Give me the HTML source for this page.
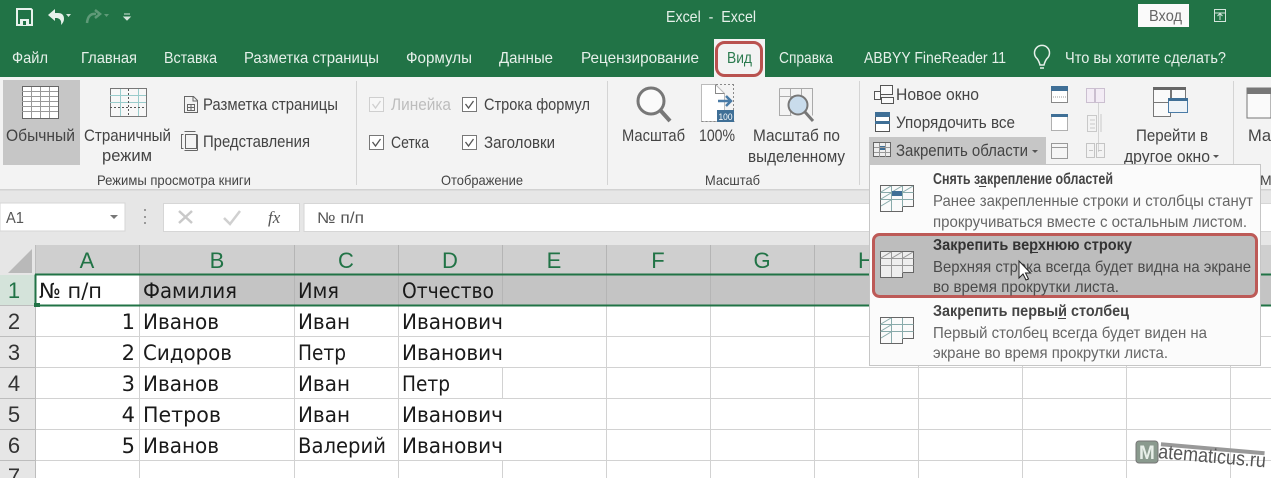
<!DOCTYPE html>
<html><head><meta charset="utf-8"><style>
html,body{margin:0;padding:0;background:#fff;width:1271px;height:478px;overflow:hidden}
svg{display:block}
text{font-family:"Liberation Sans",sans-serif;white-space:pre}
.t{font-size:16px;fill:#e6f0ea}
.r{font-size:16.5px;fill:#444}
.g{font-size:14px;fill:#444}
.c{font-size:21px;fill:#1a1a1a;font-family:"DejaVu Sans",sans-serif}
.h{font-size:22px;fill:#217346;text-anchor:middle}
.n{font-size:22px;fill:#333;text-anchor:middle}
.b{font-size:15.5px;font-weight:bold;fill:#444}
.d{font-size:16px;fill:#666}
.i{fill:none;stroke:#666;stroke-width:1}
</style></head><body>
<svg width="1271" height="478" viewBox="0 0 1271 478" xmlns="http://www.w3.org/2000/svg">
<rect width="1271" height="78" fill="#217346"/>
<rect y="77" width="1271" height="113" fill="#f3f3f3"/>
<rect y="189" width="1271" height="56" fill="#e6e6e6"/>
<rect y="189" width="1271" height="1.5" fill="#d2d2d2"/>

<!-- quick access -->
<path d="M17 9h14l1 1v15H17z" fill="none" stroke="#e8f2ec" stroke-width="2"/>
<rect x="20" y="19" width="9" height="6" fill="#e8f2ec"/><rect x="23" y="21" width="3" height="4" fill="#217346"/>
<path d="M48 15l7-6v4h3q6 0 6 6q0 3-3 6q1-6-4-7h-2v3z" fill="#e8f2ec"/>
<path d="M66 14h5l-2.500 3z" fill="#d5e5dc"/>
<path d="M96 14q-8-1-9 9M95 10l5 4-5 4" fill="none" stroke="#5f9a78" stroke-width="2.500"/>
<path d="M104 14h5l-2.500 3z" fill="#5f9a78"/>
<path d="M124 14h6M124 17h6l-3 3z" stroke="#d5e5dc" fill="#d5e5dc"/>

<text x="666" y="22" class="t" textLength="90" lengthAdjust="spacingAndGlyphs">Excel  -  Excel</text>
<rect x="1138" y="4" width="51" height="23" fill="#fafafa"/>
<text x="1149" y="21" font-size="15.500" fill="#666" textLength="33" lengthAdjust="spacingAndGlyphs">Вход</text>
<path d="M1214.500 9.500h11v12h-11zM1215 13h10M1220 20v-6M1217.500 16l2.500-2.500 2.500 2.500" fill="none" stroke="#d5e5dc"/>

<!-- tabs -->
<text x="12" y="63" class="t" textLength="36" lengthAdjust="spacingAndGlyphs">Файл</text>
<text x="81" y="63" class="t" textLength="56" lengthAdjust="spacingAndGlyphs">Главная</text>
<text x="164" y="63" class="t" textLength="53" lengthAdjust="spacingAndGlyphs">Вставка</text>
<text x="244" y="63" class="t" textLength="135" lengthAdjust="spacingAndGlyphs">Разметка страницы</text>
<text x="406" y="63" class="t" textLength="66" lengthAdjust="spacingAndGlyphs">Формулы</text>
<text x="499" y="63" class="t" textLength="54" lengthAdjust="spacingAndGlyphs">Данные</text>
<text x="581" y="63" class="t" textLength="118" lengthAdjust="spacingAndGlyphs">Рецензирование</text>
<rect x="714" y="39" width="51" height="39" fill="#f3f3f3"/>
<rect x="716.500" y="42.500" width="45" height="33" rx="8" fill="#f3f3f3" stroke="#b9524f" stroke-width="3"/>
<text x="727" y="63" class="t" style="fill:#2b7a4e" textLength="25" lengthAdjust="spacingAndGlyphs">Вид</text>
<text x="779" y="63" class="t" textLength="54" lengthAdjust="spacingAndGlyphs">Справка</text>
<text x="864" y="63" class="t" textLength="142" lengthAdjust="spacingAndGlyphs">ABBYY FineReader 11</text>
<path d="M1040 65q-1-4-3-6.500a7.500 7.500 0 1 1 10 0q-2 2.500-3 6.500zM1040 68h4" fill="none" stroke="#e6f0ea" stroke-width="1.500"/>
<text x="1065" y="63" class="t" textLength="161" lengthAdjust="spacingAndGlyphs">Что вы хотите сделать?</text>

<!-- ribbon: view modes -->
<rect x="3" y="80" width="62" height="85" fill="#c6c6c6"/>
<rect x="3" y="80" width="77" height="85" fill="#c6c6c6"/>
<g stroke="#666" fill="#fff"><rect x="22.500" y="86.500" width="36" height="32"/>
<path d="M22 91.500h36M22 96.500h36M22 101.500h36M22 106.500h36M22 111.500h36M31.500 87v31M40.500 87v31M49.500 87v31" fill="none" stroke="#999"/></g>
<text x="6" y="141" class="r" textLength="69" lengthAdjust="spacingAndGlyphs">Обычный</text>
<g fill="#f7f7f7" stroke="#777"><rect x="110.500" y="88.500" width="36" height="28"/>
<path d="M110 95.500h36M110 102.500h36M120.500 89v27M138.500 89v27" stroke="#9cc" fill="none"/>
<path d="M110 107.500h36M128.500 89v27" stroke="#555" stroke-dasharray="2 2" fill="none"/></g>
<text x="84" y="141" class="r" textLength="87" lengthAdjust="spacingAndGlyphs">Страничный</text>
<text x="102" y="161" class="r" textLength="50" lengthAdjust="spacingAndGlyphs">режим</text>
<path d="M150 96" fill="none"/>
<path d="M150.500 96" fill="none"/>
<path d="M184.500 96.500h9l4 4v12h-13zM193 97v4h4M187.500 104.500h7v6h-7zM191 104v7M187 107.500h8" class="i"/>
<text x="203" y="110" class="r" textLength="135" lengthAdjust="spacingAndGlyphs">Разметка страницы</text>
<path d="M181.500 134.500h2M181.500 148.500h2M181.500 134v15M184.500 131.500h11M197.500 134.500v16M184.500 150.500h13M185.500 134.500h11v14h-11z" class="i"/>
<text x="203" y="147" class="r" textLength="107" lengthAdjust="spacingAndGlyphs">Представления</text>
<text x="97" y="185" class="g" textLength="154" lengthAdjust="spacingAndGlyphs">Режимы просмотра книги</text>
<path d="M356.500 81v104M607.500 81v104M859.500 81v104M1098.500 88v64M1233.500 81v104" stroke="#d4d4d4" fill="none"/>

<!-- checkboxes -->
<rect x="369.500" y="97.500" width="14" height="14" fill="#f7f7f7" stroke="#cfcfcf"/>
<path d="M372.500 104l3 4 5-7" fill="none" stroke="#cfcfcf" stroke-width="1.300"/>
<text x="391" y="110" class="r" style="fill:#bdbdbd" textLength="60" lengthAdjust="spacingAndGlyphs">Линейка</text>
<rect x="462.500" y="97.500" width="14" height="14" fill="#fff" stroke="#777"/>
<path d="M465.500 104l3 4 5-7" fill="none" stroke="#555" stroke-width="1.300"/>
<text x="484" y="110" class="r" textLength="106" lengthAdjust="spacingAndGlyphs">Строка формул</text>
<rect x="369.500" y="135.500" width="14" height="14" fill="#fff" stroke="#777"/>
<path d="M372.500 142l3 4 5-7" fill="none" stroke="#555" stroke-width="1.300"/>
<text x="391" y="148" class="r" textLength="38" lengthAdjust="spacingAndGlyphs">Сетка</text>
<rect x="462.500" y="135.500" width="14" height="14" fill="#fff" stroke="#777"/>
<path d="M465.500 142l3 4 5-7" fill="none" stroke="#555" stroke-width="1.300"/>
<text x="484" y="148" class="r" textLength="71" lengthAdjust="spacingAndGlyphs">Заголовки</text>
<text x="441" y="185" class="g" textLength="82" lengthAdjust="spacingAndGlyphs">Отображение</text>

<!-- zoom -->
<circle cx="651" cy="101" r="13" fill="#fafafa" stroke="#777" stroke-width="3"/>
<path d="M661 111l9 10" stroke="#777" stroke-width="4" fill="none"/>
<text x="622" y="141" class="r" textLength="63" lengthAdjust="spacingAndGlyphs">Масштаб</text>
<path d="M701.500 84.500h14l9 9v28h-23z" fill="#fff" stroke="#bbb"/>
<path d="M715.500 84.500v9h9" fill="none" stroke="#888"/>
<path d="M701.500 121.500h33M733.500 84v38M716 84.500h18" fill="none" stroke="#888" stroke-dasharray="2 2"/>
<path d="M718 101h13M726 96l5 5-5 5" fill="none" stroke="#4a7ba6" stroke-width="2.500"/>
<rect x="717" y="110" width="17" height="12" fill="#3f6f96"/>
<text x="718.500" y="120" font-size="9.500" fill="#fff" textLength="14" lengthAdjust="spacingAndGlyphs">100</text>
<text x="699" y="141" class="r" textLength="36" lengthAdjust="spacingAndGlyphs">100%</text>
<path d="M779.500 88.500h33v27M779.500 88.500v27h12M779 96.500h18M790.500 89v26M801.500 89v6" fill="none" stroke="#aaa"/>
<circle cx="798" cy="105" r="9.500" fill="#c9dcec" stroke="#777" stroke-width="2"/>
<path d="M805 112l8 9" stroke="#777" stroke-width="3"/>
<text x="753" y="141" class="r" textLength="87" lengthAdjust="spacingAndGlyphs">Масштаб по</text>
<text x="748" y="162" class="r" textLength="97" lengthAdjust="spacingAndGlyphs">выделенному</text>
<text x="705" y="185" class="g" textLength="55" lengthAdjust="spacingAndGlyphs">Масштаб</text>

<!-- window -->
<rect x="869" y="137" width="177" height="28" fill="#c6c6c6"/>
<path d="M880.500 85.500h12v9h-12zM874.500 91.500h6v8h-6zM881.500 97.500h12v6h-12z" fill="#fafafa" stroke="#555"/>
<text x="896" y="100" class="r" textLength="83" lengthAdjust="spacingAndGlyphs">Новое окно</text>
<rect x="875.500" y="112.500" width="14" height="19" fill="#fff" stroke="#555"/>
<rect x="875" y="112" width="15" height="5" fill="#3f6f96"/><rect x="875" y="121" width="15" height="3" fill="#3f6f96"/>
<text x="896" y="128" class="r" textLength="119" lengthAdjust="spacingAndGlyphs">Упорядочить все</text>
<rect x="873.500" y="142.500" width="17" height="14" fill="#eee" stroke="#666"/>
<rect x="879" y="146" width="6" height="4" fill="#3f6f96"/>
<path d="M874 147.500h16M874 152.500h16M879.500 143v14M885.500 143v14" stroke="#999" fill="none"/>
<text x="896" y="156" class="r" textLength="132" lengthAdjust="spacingAndGlyphs">Закрепить области</text>
<path d="M1032 150h6l-3 3z" fill="#555"/>
<rect x="1051.500" y="86.500" width="16" height="16" fill="#fff" stroke="#888"/><rect x="1051" y="86" width="17" height="5" fill="#3f6f96"/>
<path d="M1053 97h13" stroke="#999" stroke-dasharray="1 1"/>
<rect x="1051.500" y="114.500" width="16" height="16" fill="#fff" stroke="#666" stroke-dasharray="1 1"/><rect x="1051" y="114" width="17" height="3" fill="#3f6f96"/>
<rect x="1051.500" y="143.500" width="16" height="15" fill="#f5f5f5" stroke="#999"/><path d="M1052 147.500h15" stroke="#999"/>
<path d="M1086.500 88.500h8v14h-8zM1095.500 88.500h9v14h-9z" fill="#f3ecf5" stroke="#cbbfd0"/>
<path d="M1087.500 115.500h9v16h-9zM1090 120h5M1090 124h5M1090 128h5M1101 114v18" fill="none" stroke="#c9c9c9"/>
<path d="M1086.500 143.500h8v14h-8zM1096.500 143.500h8v14h-8zM1089 150.500h4M1098 150.500h4" fill="none" stroke="#c4c4c4"/>
<g fill="#fafafa" stroke="#777"><rect x="1153.500" y="87.500" width="17" height="25"/><rect x="1171.500" y="87.500" width="14" height="25"/><rect x="1153.500" y="102.500" width="17" height="14"/><rect x="1168.500" y="98.500" width="19" height="14" stroke="#4a7ba6" fill="#eef3f7"/></g>
<rect x="1153" y="87" width="33" height="3" fill="#666"/>
<rect x="1168" y="98" width="20" height="3" fill="#3f6f96"/>
<text x="1136" y="141" class="r" textLength="72" lengthAdjust="spacingAndGlyphs">Перейти в</text>
<text x="1124" y="162" class="r" textLength="86" lengthAdjust="spacingAndGlyphs">другое окно</text>
<path d="M1213 155h6l-3 3z" fill="#555"/>
<rect x="1247" y="88" width="24" height="30" fill="#fafafa" stroke="#777"/><rect x="1247" y="88" width="24" height="6" fill="#777"/>
<text x="1248" y="141" class="r">Ма</text>
<text x="1260" y="185" class="g">Ма</text>

<!-- formula bar -->
<rect x="0" y="203" width="125" height="28" fill="#fff" stroke="#d6d6d6"/>
<text x="6" y="223" font-size="15.500" fill="#555" textLength="18" lengthAdjust="spacingAndGlyphs">A1</text>
<path d="M110 215h8l-4 4z" fill="#777"/>
<path d="M145 209v2M145 216v2M145 222v2" stroke="#999" stroke-width="2"/>
<rect x="163.500" y="203.500" width="136" height="28" fill="#fff" stroke="#d6d6d6"/>
<path d="M179 211l13 12M192 211l-13 12" stroke="#c9c9c9" stroke-width="2.500"/>
<path d="M224 218l6 6 10-13" fill="none" stroke="#d0d0d0" stroke-width="2.500"/>
<text x="268" y="223" font-size="17" font-style="italic" style="font-family:'Liberation Serif',serif" fill="#555">fx</text>
<rect x="304" y="203.500" width="968" height="28" fill="#fff" stroke="#d6d6d6"/>
<text x="317" y="223" font-size="15.500" fill="#555" textLength="47" lengthAdjust="spacingAndGlyphs">№ п/п</text>

<!-- grid -->
<rect y="245" width="1271" height="233" fill="#fff"/>
<rect x="0" y="245" width="35" height="233" fill="#e6e6e6"/>
<rect x="35" y="245" width="1236" height="30" fill="#cfcfcf"/>
<path d="M32 249v24H8z" fill="#b9b9b9"/>
<rect x="0" y="275" width="35" height="31" fill="#d4e3da"/>
<rect x="139" y="275" width="1132" height="31" fill="#c4c4c4"/>
<g stroke="#d2d2d2" fill="none">
<path d="M0 336.500h1271M0 367.500h1271M0 398.500h1271M0 429.500h1271M0 460.500h1271"/>
<path d="M139.500 306V478M294.500 306V478M398.500 306V478M606.500 306V478M710.500 306V478M814.500 306V478M918.500 306V478M1022.500 306V478M1126.500 306V478M1230.500 306V478M502.500 368v31M502.500 461v17"/>
<path d="M139.500 245v30M294.500 245v30M398.500 245v30M502.500 245v30M606.500 245v30M710.500 245v30M814.500 245v30M918.500 245v30" stroke="#b5b5b5"/>
<path d="M294.500 275v31M398.500 275v31M502.500 275v31M606.500 275v31M710.500 275v31M814.500 275v31" stroke="#b5b5b5"/>
</g>
<path d="M0 305.500h35M0 336.500h35M0 367.500h35M0 398.500h35M0 429.500h35M0 460.500h35M35.500 245V478" stroke="#bdbdbd" fill="none"/>
<path d="M35.500 274.500V306M35 274.500h1236M35 305.500h1236" stroke="#217346" stroke-width="2" fill="none"/>
<rect x="34" y="303" width="6" height="4" fill="#217346"/>
<text x="87" y="268" class="h">A</text><text x="217" y="268" class="h">B</text><text x="346" y="268" class="h">C</text><text x="450" y="268" class="h">D</text>
<text x="554" y="268" class="h">E</text><text x="658" y="268" class="h">F</text><text x="762" y="268" class="h">G</text><text x="866" y="268" class="h">H</text>
<text x="14" y="298" class="h">1</text><text x="14" y="329" class="n">2</text><text x="14" y="360" class="n">3</text><text x="14" y="391" class="n">4</text><text x="14" y="422" class="n">5</text><text x="14" y="453" class="n">6</text><text x="14" y="484" class="n">7</text>

<text x="39" y="298" class="c" textLength="63" lengthAdjust="spacingAndGlyphs">№ п/п</text>
<text x="143" y="298" class="c" textLength="94" lengthAdjust="spacingAndGlyphs">Фамилия</text>
<text x="298" y="298" class="c" textLength="41" lengthAdjust="spacingAndGlyphs">Имя</text>
<text x="402" y="298" class="c" textLength="92" lengthAdjust="spacingAndGlyphs">Отчество</text>

<text x="135" y="329" class="c" text-anchor="end">1</text><text x="143" y="329" class="c" textLength="76" lengthAdjust="spacingAndGlyphs">Иванов</text><text x="298" y="329" class="c" textLength="52" lengthAdjust="spacingAndGlyphs">Иван</text><text x="402" y="329" class="c" textLength="101" lengthAdjust="spacingAndGlyphs">Иванович</text>
<text x="135" y="360" class="c" text-anchor="end">2</text><text x="143" y="360" class="c" textLength="89" lengthAdjust="spacingAndGlyphs">Сидоров</text><text x="298" y="360" class="c" textLength="48" lengthAdjust="spacingAndGlyphs">Петр</text><text x="402" y="360" class="c" textLength="101" lengthAdjust="spacingAndGlyphs">Иванович</text>
<text x="135" y="391" class="c" text-anchor="end">3</text><text x="143" y="391" class="c" textLength="76" lengthAdjust="spacingAndGlyphs">Иванов</text><text x="298" y="391" class="c" textLength="52" lengthAdjust="spacingAndGlyphs">Иван</text><text x="402" y="391" class="c" textLength="48" lengthAdjust="spacingAndGlyphs">Петр</text>
<text x="135" y="422" class="c" text-anchor="end">4</text><text x="143" y="422" class="c" textLength="78" lengthAdjust="spacingAndGlyphs">Петров</text><text x="298" y="422" class="c" textLength="52" lengthAdjust="spacingAndGlyphs">Иван</text><text x="402" y="422" class="c" textLength="101" lengthAdjust="spacingAndGlyphs">Иванович</text>
<text x="135" y="453" class="c" text-anchor="end">5</text><text x="143" y="453" class="c" textLength="76" lengthAdjust="spacingAndGlyphs">Иванов</text><text x="298" y="453" class="c" textLength="88" lengthAdjust="spacingAndGlyphs">Валерий</text><text x="402" y="453" class="c" textLength="101" lengthAdjust="spacingAndGlyphs">Иванович</text>

<!-- watermark -->
<rect x="1136" y="441" width="22" height="22" rx="3" fill="#8a9a8e" stroke="#777"/>
<text x="1139" y="459" font-size="19" fill="#e8efe9" style="font-weight:bold">M</text>
<g transform="rotate(5 1158 455)"><path d="M1160 444h104" stroke="#999" stroke-width="4"/>
<text x="1158" y="458" font-size="20" fill="#555" textLength="108" lengthAdjust="spacingAndGlyphs">atematicus.ru</text></g>

<!-- dropdown -->
<rect x="869.500" y="164.500" width="391" height="201" fill="#fbfbfb" stroke="#c6c6c6"/>
<rect x="873.500" y="234.500" width="383" height="62" rx="6" fill="#bdbdbd" stroke="#bd5a57" stroke-width="3"/>
<g fill="#fafafa" stroke="#666">
<path d="M880.500 185.500h33v21h-11v5h-22z"/><path d="M880.500 192.500h33M880.500 199.500h33M891.500 186v25M902.500 186v21" fill="none" stroke="#8aa"/>
<path d="M881 192l10-6M892 192l10-6M903 192l10-6M881 199l10-6M881 206l10-6" fill="none" stroke="#8aa"/>
<path d="M880.500 251.500h33v21h-11v5h-22z" fill="#eee"/><path d="M880.500 258.500h33M880.500 265.500h33M891.500 252v25M902.500 252v21" fill="none" stroke="#999"/>
<path d="M881 258l10-6M892 258l10-6M903 258l10-6" fill="none" stroke="#999"/>
<path d="M880.500 317.500h33v21h-11v5h-22z"/><path d="M880.500 324.500h33M880.500 331.500h33M891.500 318v25M902.500 318v21" fill="none" stroke="#8aa"/>
<path d="M881 324l10-6M881 331l10-6M881 338l10-6" fill="none" stroke="#8aa"/>
</g>
<rect x="892" y="191" width="10" height="5" fill="#3f6f96"/>
<text x="933" y="184" class="b" textLength="180" lengthAdjust="spacingAndGlyphs">Снять закрепление областей</text>
<path d="M979 186.500h7" stroke="#444"/>
<text x="933" y="206" class="d" textLength="320" lengthAdjust="spacingAndGlyphs">Ранее закрепленные строки и столбцы станут</text>
<text x="933" y="227" class="d" textLength="314" lengthAdjust="spacingAndGlyphs">прокручиваться вместе с остальным листом.</text>
<text x="933" y="250" class="b" style="fill:#333" textLength="199" lengthAdjust="spacingAndGlyphs">Закрепить верхнюю строку</text>
<path d="M1030 252.500h8" stroke="#333"/>
<text x="933" y="272" class="d" style="fill:#4a4a4a" textLength="318" lengthAdjust="spacingAndGlyphs">Верхняя строка всегда будет видна на экране</text>
<text x="933" y="292" class="d" style="fill:#4a4a4a" textLength="186" lengthAdjust="spacingAndGlyphs">во время прокрутки листа.</text>
<text x="933" y="316" class="b" textLength="196" lengthAdjust="spacingAndGlyphs">Закрепить первый столбец</text>
<path d="M1058 318.500h8" stroke="#444"/>
<text x="933" y="338" class="d" textLength="274" lengthAdjust="spacingAndGlyphs">Первый столбец всегда будет виден на</text>
<text x="933" y="358" class="d" textLength="235" lengthAdjust="spacingAndGlyphs">экране во время прокрутки листа.</text>
<path d="M1019 261v17l4-4 3 6 2.500-1-3-6h5z" fill="#fff" stroke="#222"/>
</svg>
</body></html>
